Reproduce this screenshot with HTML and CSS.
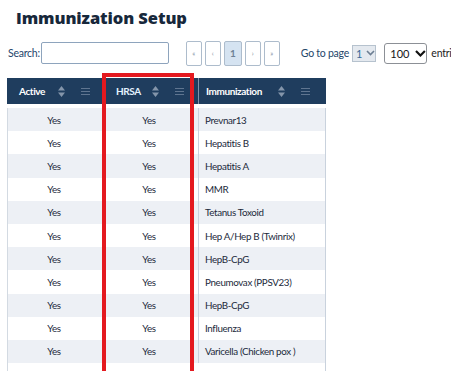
FILE: index.html
```html
<!DOCTYPE html>
<html lang="en">
<head>
  <meta charset="UTF-8" />
  <title>Immunization Setup</title>
  <link rel="stylesheet" href="styles.css">
</head>
<body>
  <h1 class="page-title">Immunization Setup</h1>

  <div class="toolbar">
    <label class="search">Search:<input type="text" class="search-input" /></label>

    <div class="pager">
      <span class="pg-btn">&laquo;</span>
      <span class="pg-btn">&lsaquo;</span>
      <span class="pg-btn current">1</span>
      <span class="pg-btn">&rsaquo;</span>
      <span class="pg-btn">&raquo;</span>
    </div>

    <span class="goto">Go to page</span>
    <span class="pick pick-page">1
      <svg width="9" height="6" viewBox="0 0 9 6"><path d="M1 1l3.5 3.5L8 1" fill="none" stroke="#6d7f93" stroke-width="1.6"/></svg>
    </span>
    <span class="pick pick-size">100
      <svg width="11" height="7" viewBox="0 0 11 7"><path d="M1 1l4.5 4.5L10 1" fill="none" stroke="#111" stroke-width="2.2"/></svg>
    </span>
    <span class="entries">entries</span>
  </div>

  <div class="grid-wrap">
    <div class="grid-head">
      <div class="th col-active">Active
        <span class="th-icons">
          <svg class="sort" width="7" height="11" viewBox="0 0 7 11"><path d="M3.5 0L7 4.5H0z M3.5 11L0 6.5h7z" fill="#8495aa"/></svg>
          <svg class="menu" width="9" height="7" viewBox="0 0 9 7"><path d="M0 .5h9M0 3.5h9M0 6.5h9" stroke="#5f7590" stroke-width="1"/></svg>
        </span>
      </div>
      <div class="th col-hrsa">HRSA
        <span class="th-icons">
          <svg class="sort" width="7" height="11" viewBox="0 0 7 11"><path d="M3.5 0L7 4.5H0z M3.5 11L0 6.5h7z" fill="#8495aa"/></svg>
          <svg class="menu" width="9" height="7" viewBox="0 0 9 7"><path d="M0 .5h9M0 3.5h9M0 6.5h9" stroke="#5f7590" stroke-width="1"/></svg>
        </span>
      </div>
      <div class="th col-name">Immunization
        <span class="th-icons">
          <svg class="sort" width="7" height="11" viewBox="0 0 7 11"><path d="M3.5 0L7 4.5H0z M3.5 11L0 6.5h7z" fill="#8495aa"/></svg>
          <svg class="menu" width="9" height="7" viewBox="0 0 9 7"><path d="M0 .5h9M0 3.5h9M0 6.5h9" stroke="#5f7590" stroke-width="1"/></svg>
        </span>
      </div>
    </div>

    <div class="grid-body">
      <div class="row"><div class="td yes">Yes</div><div class="td yes">Yes</div><div class="td name">Prevnar13</div></div>
      <div class="row"><div class="td yes">Yes</div><div class="td yes">Yes</div><div class="td name">Hepatitis B</div></div>
      <div class="row"><div class="td yes">Yes</div><div class="td yes">Yes</div><div class="td name">Hepatitis A</div></div>
      <div class="row"><div class="td yes">Yes</div><div class="td yes">Yes</div><div class="td name">MMR</div></div>
      <div class="row"><div class="td yes">Yes</div><div class="td yes">Yes</div><div class="td name">Tetanus Toxoid</div></div>
      <div class="row"><div class="td yes">Yes</div><div class="td yes">Yes</div><div class="td name">Hep A/Hep B (Twinrix)</div></div>
      <div class="row"><div class="td yes">Yes</div><div class="td yes">Yes</div><div class="td name">HepB-CpG</div></div>
      <div class="row"><div class="td yes">Yes</div><div class="td yes">Yes</div><div class="td name">Pneumovax (PPSV23)</div></div>
      <div class="row"><div class="td yes">Yes</div><div class="td yes">Yes</div><div class="td name">HepB-CpG</div></div>
      <div class="row"><div class="td yes">Yes</div><div class="td yes">Yes</div><div class="td name">Influenza</div></div>
      <div class="row"><div class="td yes">Yes</div><div class="td yes">Yes</div><div class="td name">Varicella (Chicken pox )</div></div>
    </div>

    <!-- выделение колонки HRSA -->
    <div class="highlight"></div>
  </div>
</body>
</html>
```

FILE: styles.css
```css
html, body {
  margin: 0;
  padding: 0;
  background: #fff;
  font-family: "Lato", "Liberation Sans", sans-serif;
  color: #1c2a3b;
  overflow: hidden;
}

.page-title {
  margin: 0;
  padding: 8px 0 0 16px;
  height: 31px;
  box-sizing: border-box;
  font-family: "Open Sans", sans-serif;
  font-size: 16.5px;
  font-weight: 800;
  color: #17283b;
  line-height: 20px;
  letter-spacing: -0.1px;
}

/* Панель поиска и пагинации */
.toolbar {
  display: flex;
  align-items: center;
  height: 26px;
  margin-top: 9px;
  padding-left: 8px;
  white-space: nowrap;
  font-size: 10.5px;
  letter-spacing: -0.25px;
}

.search {
  display: flex;
  align-items: center;
  color: #24466b;
}

.search-input {
  width: 128px;
  height: 22px;
  box-sizing: border-box;
  margin: 0 0 0 1px;
  border: 1px solid #8ea4bd;
  border-radius: 2px;
  padding: 0 4px;
}

.pager {
  display: flex;
  gap: 3px;
  margin-left: 17px;
  letter-spacing: 0;
}

.pg-btn {
  width: 16px;
  height: 25px;
  box-sizing: border-box;
  border: 1px solid #adbccc;
  border-radius: 2px;
  display: flex;
  align-items: center;
  justify-content: center;
  font-size: 7px;
  color: #7b8b9c;
}

.pg-btn.current {
  width: 18px;
  background: #d5e3f1;
  font-size: 10px;
  font-weight: 700;
  color: #6e8196;
}

.goto {
  margin-left: 21px;
  color: #25466a;
}

.pick {
  display: flex;
  align-items: center;
  box-sizing: border-box;
  letter-spacing: 0;
}

.pick-page {
  margin-left: 3px;
  width: 28px;
  height: 17px;
  padding: 0 0 0 3px;
  gap: 4px;
  background: #e4e9ef;
  border: 1px solid #b6c2ce;
  color: #3a6a98;
  font-size: 11px;
}

.pick-size {
  margin-left: 8px;
  width: 43px;
  height: 21px;
  padding: 0 0 0 5px;
  gap: 6px;
  border: 1px solid #8c9096;
  border-radius: 3px;
  color: #151515;
  font-size: 11px;
}

.entries {
  margin-left: 4px;
  color: #1c1c1c;
}

/* Таблица */
.grid-wrap {
  position: relative;
  margin: 12px 0 0 7px;
  width: 319px;
}

.grid-head {
  display: grid;
  grid-template-columns: 93px 98px 128px;
  height: 26px;
  background: #1f3d5e;
}

.th {
  display: flex;
  align-items: center;
  color: #fff;
  font-size: 10px;
  font-weight: 700;
  letter-spacing: -0.4px;
}

.th-icons {
  margin-left: auto;
  display: flex;
  align-items: center;
  gap: 16px;
}

.col-active { padding: 0 10px 0 12px; }
.col-hrsa { padding: 0 14px 0 16px; color: #e4f2ff; }
.col-name { padding: 0 16px 0 7px; border-left: 1px solid #7f93aa; }

.grid-body {
  margin-top: 4px;
  padding-bottom: 8px;
  border-left: 1px solid #d3dae2;
  border-right: 1px solid #c9d2dd;
}

.row {
  display: grid;
  grid-template-columns: 92px 98px 127px;
  height: 23.2px;
  align-items: center;
  font-size: 9.8px;
  letter-spacing: -0.35px;
}

.row:nth-child(odd) {
  background: #edf0f5;
}

.td.yes {
  text-align: center;
}

.td.name {
  height: 100%;
  display: flex;
  align-items: center;
  padding-left: 6px;
  border-left: 1px solid #c9d2dd;
}

.highlight {
  position: absolute;
  left: 95px;
  top: -5px;
  width: 92px;
  height: 302px;
  border: 4px solid #e4191f;
  box-sizing: border-box;
  pointer-events: none;
}
```
